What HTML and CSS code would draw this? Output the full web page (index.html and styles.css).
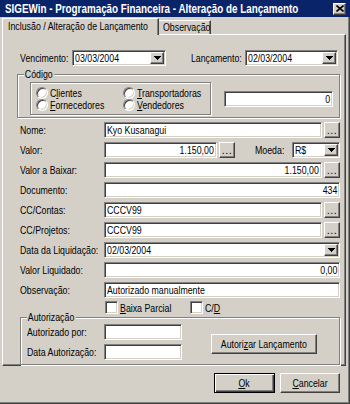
FILE: index.html
```html
<!DOCTYPE html>
<html lang="pt-BR">
<head>
<meta charset="utf-8">
<title>SIGEWin - Programação Financeira</title>
<link rel="stylesheet" href="styles.css">
</head>
<body>
<div class="window">
  <div class="titlebar">
    <span class="title"><span class="title-text">SIGEWin - Programação Financeira - Alteração de Lançamento</span></span>
    <span class="close btn"><svg width="8" height="7" viewBox="0 0 8 7"><path d="M0.5 0.5L7.5 6.5M7.5 0.5L0.5 6.5" stroke="#000" stroke-width="1.6"/></svg></span>
  </div>
  <div class="tabs">
    <div class="tab active"><span class="t">Inclusão / Alteração de Lançamento</span></div>
    <div class="tab inactive"><span class="t">Observação</span></div>
  </div>
  <div class="panel">
    <div class="row top-row">
      <span class="lbl w-venc">Vencimento:</span>
      <div class="field combo w-date"><span class="val t">03/03/2004</span><span class="ddbtn btn"><svg width="7" height="4" viewBox="0 0 7 4"><path d="M0 0h7v1H0zM1 1h5v1H1zM2 2h3v1H2zM3 3h1v1H3z" fill="#000"/></svg></span></div>
      <span class="lbl lanc">Lançamento:</span>
      <div class="field combo w-date2"><span class="val t">02/03/2004</span><span class="ddbtn btn"><svg width="7" height="4" viewBox="0 0 7 4"><path d="M0 0h7v1H0zM1 1h5v1H1zM2 2h3v1H2zM3 3h1v1H3z" fill="#000"/></svg></span></div>
    </div>

    <div class="group codigo">
      <span class="legend">Código</span>
      <div class="radios etched">
        <span class="radio"><i class="rb"></i><span class="t">C<u>l</u>ientes</span></span>
        <span class="radio"><i class="rb"></i><span class="t"><u>T</u>ransportadoras</span></span>
        <span class="radio"><i class="rb"></i><span class="t"><u>F</u>ornecedores</span></span>
        <span class="radio"><i class="rb"></i><span class="t"><u>V</u>endedores</span></span>
      </div>
      <div class="field right w-code"><span class="t">0</span></div>
    </div>

    <div class="rows">
      <div class="row">
        <span class="lbl w-lbl">Nome:</span>
        <div class="field w-mid"><span class="t">Kyo Kusanagui</span></div>
        <span class="btn dots">...</span>
      </div>
      <div class="row">
        <span class="lbl w-lbl">Valor:</span>
        <div class="field right w-valor"><span class="t">1.150,00</span></div>
        <span class="btn dots">...</span>
        <span class="lbl moeda">Moeda:</span>
        <div class="field combo w-moeda"><span class="val t">R$</span><span class="ddbtn btn"><svg width="7" height="4" viewBox="0 0 7 4"><path d="M0 0h7v1H0zM1 1h5v1H1zM2 2h3v1H2zM3 3h1v1H3z" fill="#000"/></svg></span></div>
      </div>
      <div class="row">
        <span class="lbl w-lbl">Valor a Baixar:</span>
        <div class="field right w-mid"><span class="t">1.150,00</span></div>
        <span class="btn dots">...</span>
      </div>
      <div class="row">
        <span class="lbl w-lbl">Documento:</span>
        <div class="field right w-full"><span class="t">434</span></div>
      </div>
      <div class="row">
        <span class="lbl w-lbl">CC/Contas:</span>
        <div class="field w-mid"><span class="t">CCCV99</span></div>
        <span class="btn dots">...</span>
      </div>
      <div class="row">
        <span class="lbl w-lbl">CC/Projetos:</span>
        <div class="field w-mid"><span class="t">CCCV99</span></div>
        <span class="btn dots">...</span>
      </div>
      <div class="row">
        <span class="lbl w-lbl">Data da Liquidação:</span>
        <div class="field combo w-full"><span class="val t">02/03/2004</span><span class="ddbtn btn"><svg width="7" height="4" viewBox="0 0 7 4"><path d="M0 0h7v1H0zM1 1h5v1H1zM2 2h3v1H2zM3 3h1v1H3z" fill="#000"/></svg></span></div>
      </div>
      <div class="row">
        <span class="lbl w-lbl">Valor Liquidado:</span>
        <div class="field right w-full"><span class="t">0,00</span></div>
      </div>
      <div class="row">
        <span class="lbl w-lbl">Observação:</span>
        <div class="field w-full"><span class="t">Autorizado manualmente</span></div>
      </div>
    </div>

    <div class="checks">
      <span class="check first"><i class="cb"></i><span class="t"><u>B</u>aixa Parcial</span></span>
      <span class="check"><i class="cb"></i><span class="t">C/<u>D</u></span></span>
    </div>

    <div class="group autoriz">
      <span class="legend">Autorização</span>
      <div class="auth-fields">
        <div class="row">
          <span class="lbl w-auth">Autorizado por:</span>
          <div class="field w-auth-in"></div>
        </div>
        <div class="row">
          <span class="lbl w-auth">Data Autorização:</span>
          <div class="field w-auth-in"></div>
        </div>
      </div>
      <span class="btn push auth-btn"><span class="t">Autori<u>z</u>ar Lançamento</span></span>
    </div>
  </div>

  <div class="footer">
    <span class="btn push default ok"><span class="t"><u>O</u>k</span></span>
    <span class="btn push cancel"><span class="t"><u>C</u>ancelar</span></span>
  </div>
</div>
</body>
</html>
```

FILE: styles.css
```css
* {
  box-sizing: border-box;
  margin: 0;
  padding: 0;
}

html,
body {
  width: 350px;
  height: 404px;
  overflow: hidden;
}

body {
  background: #d4d0c8;
  font-family: "Liberation Sans", Arial, sans-serif;
  font-size: 11px;
  color: #000;
}

u {
  text-decoration: underline;
  text-underline-offset: 1px;
}

/* narrow text: the original dialog font is a condensed bitmap sans */
.t,
.lbl,
.legend {
  display: inline-block;
  white-space: nowrap;
  transform: scaleX(0.8);
  transform-origin: 0 50%;
}

.right .t,
.lanc {
  transform-origin: 100% 50%;
}

.push .t {
  transform-origin: 50% 50%;
}

.window {
  width: 350px;
  height: 404px;
  overflow: hidden;
  background: #d4d0c8;
  box-shadow: inset -1px -1px 0 #404040, inset -2px -2px 0 #808080;
  display: flex;
  flex-direction: column;
}

/* ---------- title bar ---------- */
.titlebar {
  height: 17px;
  background: #0a246a;
  color: #fff;
  display: flex;
  align-items: center;
  padding: 0 4px 0 5px;
}

.title {
  flex: 1;
  min-width: 0;
  overflow: hidden;
  font-weight: bold;
  font-size: 12px;
  white-space: nowrap;
}

.title-text {
  display: inline-block;
  transform: scaleX(0.82);
  transform-origin: 0 50%;
}

.btn {
  background: #d4d0c8;
  border: 1px solid;
  border-color: #fff #404040 #404040 #fff;
  box-shadow: inset -1px -1px 0 #808080;
  display: flex;
  align-items: center;
  justify-content: center;
  flex: none;
}

.close {
  width: 13px;
  height: 12px;
}

/* ---------- tabs ---------- */
.tabs {
  display: flex;
  align-items: flex-end;
  height: 17px;
  padding-left: 2px;
}

.tab {
  white-space: nowrap;
  border: 1px solid;
  border-bottom: none;
  border-color: #fff #404040 transparent #fff;
  box-shadow: inset -1px 0 0 #808080;
  background: #d4d0c8;
  overflow: hidden;
}

.tab.active {
  width: 157px;
  height: 17px;
  margin-bottom: -1px;
  padding-left: 5px;
  line-height: 14px;
  position: relative;
  z-index: 1;
}

.tab.inactive {
  width: 52px;
  height: 14px;
  padding-left: 4px;
  line-height: 12px;
  border-left: none;
}

/* ---------- panel ---------- */
.panel {
  margin-left: 2px;
  width: 344px;
  height: 332px;
  border: 1px solid;
  border-color: #fff #404040 #404040 #fff;
  box-shadow: inset -1px -1px 0 #808080;
}

.row {
  display: flex;
  align-items: center;
  height: 16px;
}

.lbl {
  flex: none;
}

.field {
  height: 16px;
  background: #fff;
  border: 1px solid;
  border-color: #808080 #fff #fff #808080;
  box-shadow: inset 1px 1px 0 #404040, inset -1px -1px 0 #d4d0c8;
  display: flex;
  align-items: center;
  padding: 0 2px;
  white-space: nowrap;
  overflow: hidden;
  flex: none;
}

.field.right {
  justify-content: flex-end;
}

.combo {
  padding-right: 0;
}

.combo .val {
  flex: 1;
}

.ddbtn {
  width: 14px;
  height: 12px;
  margin-right: 1px;
}

.dots {
  width: 16px;
  height: 16px;
  margin-left: 2px;
  align-items: flex-end;
  line-height: 11px;
  padding-bottom: 1px;
  letter-spacing: 0.5px;
}

.top-row {
  margin: 15px 0 0 17px;
  width: 318px;
}

.w-venc {
  width: 52px;
}

.w-date {
  width: 94px;
}

.lanc {
  flex: 1;
  text-align: right;
  padding-right: 4px;
}

.w-date2 {
  width: 93px;
}

/* ---------- group boxes ---------- */
.etched,
.group {
  border: 1px solid #808080;
  box-shadow: inset 1px 1px 0 #fff, 1px 1px 0 #fff;
}

.group {
  position: relative;
  display: flex;
  align-items: flex-start;
}

.legend {
  position: absolute;
  top: -7px;
  left: 6px;
  padding: 0 2px 0 1px;
  line-height: 13px;
  background: #d4d0c8;
}

.codigo {
  margin: 8px 0 0 14px;
  width: 323px;
  height: 44px;
  padding: 7px 0 0 12px;
}

.radios {
  width: 181px;
  height: 33px;
  display: grid;
  grid-template-columns: 87px 1fr;
  grid-auto-rows: 12px;
  padding: 4px 0 0 5px;
}

.radio {
  display: flex;
  align-items: center;
  white-space: nowrap;
  line-height: 12px;
}

.rb {
  width: 12px;
  height: 12px;
  border-radius: 50%;
  background: #fff;
  border: 1px solid;
  border-color: #808080 #fff #fff #808080;
  box-shadow: inset 1px 1px 0 #404040, inset -1px -1px 0 #d4d0c8;
  margin-right: 2px;
  flex: none;
}

.w-code {
  width: 109px;
  margin: 9px 0 0 13px;
}

/* ---------- main rows ---------- */
.rows {
  margin: 4px 0 0 17px;
  width: 320px;
  display: flex;
  flex-direction: column;
  gap: 4px;
}

.w-lbl {
  width: 84px;
}

.w-mid {
  width: 218px;
}

.w-full {
  width: 236px;
}

.w-valor {
  width: 113px;
}

.moeda {
  margin-left: 20px;
  width: 37px;
}

.w-moeda {
  width: 48px;
}

/* ---------- checkboxes ---------- */
.checks {
  display: flex;
  align-items: center;
  height: 13px;
  margin: 3px 0 0 102px;
}

.check {
  display: flex;
  align-items: center;
  gap: 2px;
  white-space: nowrap;
}

.check.first {
  width: 85px;
}

.cb {
  width: 13px;
  height: 13px;
  background: #fff;
  border: 1px solid;
  border-color: #808080 #fff #fff #808080;
  box-shadow: inset 1px 1px 0 #404040, inset -1px -1px 0 #d4d0c8;
  flex: none;
}

/* ---------- autorização ---------- */
.autoriz {
  margin: 3px 0 0 17px;
  width: 320px;
  height: 48px;
  padding: 6px 0 0 6px;
}

.auth-fields {
  display: flex;
  flex-direction: column;
  gap: 4px;
}

.w-auth {
  width: 77px;
}

.w-auth-in {
  width: 78px;
}

.push {
  height: 20px;
  white-space: nowrap;
}

.auth-btn {
  width: 106px;
  margin: 10px 0 0 29px;
}

/* ---------- footer ---------- */
.footer {
  display: flex;
  justify-content: flex-end;
  gap: 5px;
  margin-top: 7px;
  padding-right: 10px;
}

.ok {
  width: 61px;
}

.cancel {
  width: 60px;
}

.default {
  border-color: #000;
  box-shadow: inset 1px 1px 0 #fff, inset -1px -1px 0 #404040, inset -2px -2px 0 #808080;
}
```
